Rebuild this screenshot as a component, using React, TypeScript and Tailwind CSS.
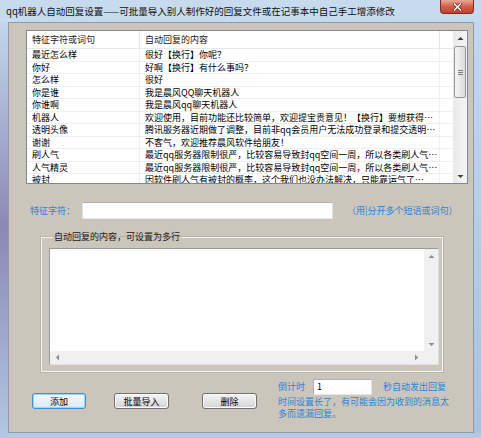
import * as React from 'react'

const rows: [string, string][] = [
  ['最近怎么样', '很好【换行】你呢？'],
  ['你好', '好啊【换行】有什么事吗？'],
  ['怎么样', '很好'],
  ['你是谁', '我是晨风QQ聊天机器人'],
  ['你谁啊', '我是晨风qq聊天机器人'],
  ['机器人', '欢迎使用，目前功能还比较简单，欢迎提宝贵意见！【换行】要想获得…'],
  ['透明头像', '腾讯服务器近期做了调整，目前非qq会员用户无法成功登录和提交透明…'],
  ['谢谢', '不客气，欢迎推荐晨风软件给朋友！'],
  ['刷人气', '最近qq服务器限制很严，比较容易导致封qq空间一周，所以各类刷人气…'],
  ['人气精灵', '最近qq服务器限制很严，比较容易导致封qq空间一周，所以各类刷人气…'],
  ['被封', '因软件刷人气有被封的概率，这个我们也没办法解决，只能靠运气了…'],
]

function Arrow({ dir }: { dir: 'up' | 'down' | 'left' | 'right' }) {
  const pts = {
    up: '0.5,5 3.5,2 6.5,5',
    down: '0.5,2 3.5,5 6.5,2',
    left: '5,0.5 2,3.5 5,6.5',
    right: '2,0.5 5,3.5 2,6.5',
  }[dir]
  return (
    <svg width="7" height="7" viewBox="0 0 7 7">
      <polygon points={pts} fill="currentColor" />
    </svg>
  )
}

function Button({ label, focused, className = '' }: { label: string; focused?: boolean; className?: string }) {
  return (
    <div
      className={`flex h-[16px] items-center justify-center rounded-[3px] border text-[9px] leading-none text-black ${
        focused
          ? 'border-[#3c8fd0] bg-gradient-to-b from-[#f4f9fd] to-[#d9e9f6] shadow-[inset_0_0_0_1px_#9fd4f4]'
          : 'border-[#707070] bg-gradient-to-b from-[#f4f4f4] via-[#e6e6e6] to-[#d2d2d2] shadow-[inset_0_0_0_1px_#fcfcfc]'
      } ${className}`}
    >
      {label}
    </div>
  )
}

export default function App() {
  return (
    <div className="h-[438px] w-[481px] overflow-hidden bg-gradient-to-b from-[#c7dbef] to-[#b4cbe4] font-['Noto_Sans_CJK_SC',sans-serif] text-[9px] text-black">
      {/* title bar */}
      <div className="flex h-[22px] items-start">
        <div className="pl-[6px] pt-[5px] text-[9.5px] leading-[12px] text-[#101010]">
          qq机器人自动回复设置——可批量导入别人制作好的回复文件或在记事本中自己手工增添修改
        </div>
        <div className="ml-auto mr-[7px] flex h-[14px] w-[34px] items-center justify-center rounded-b-[4px] border border-t-0 border-[#7a2c22] bg-gradient-to-b from-[#e8a898] via-[#d0604a] to-[#c4402a]">
          <svg width="9" height="8" viewBox="0 0 9 8">
            <path d="M1.5 1 L7.5 7 M7.5 1 L1.5 7" stroke="#5a1a12" strokeWidth="3" strokeLinecap="square" />
            <path d="M1.5 1 L7.5 7 M7.5 1 L1.5 7" stroke="#ffffff" strokeWidth="1.6" strokeLinecap="square" />
          </svg>
        </div>
      </div>

      <div className="flex h-[411px]">
        <div className="w-[8px] bg-gradient-to-b from-[#c2d7ee] via-[#8c88b4] to-[#b0c6e2]" />

        {/* client area */}
        <div className="flex w-[466px] flex-col border border-[#8d9bab] bg-[#ccc5bb]">
          {/* list view */}
          <div className="ml-[17px] mt-[7px] flex h-[154px] w-[442px] border border-[#828790] bg-white">
            <div className="flex-1 overflow-hidden">
              <div className="flex h-[18px] border-b border-[#e8e8e8] text-[#1a1a1a]">
                <div className="flex w-[113px] items-center border-r border-[#e5e5e5] pl-[5px]">特征字符或词句</div>
                <div className="flex w-[300px] items-center border-r border-[#e5e5e5] pl-[5px]">自动回复的内容</div>
                <div className="flex-1" />
              </div>
              {rows.map(([k, v]) => (
                <div key={k} className="flex h-[12.5px] border-b border-[#efefef] leading-[12px]">
                  <div className="w-[113px] overflow-hidden whitespace-nowrap border-r border-[#efefef] pl-[5px]">{k}</div>
                  <div className="w-[300px] overflow-hidden whitespace-nowrap border-r border-[#efefef] pl-[5px]">{v}</div>
                  <div className="flex-1" />
                </div>
              ))}
            </div>
            {/* scrollbar */}
            <div className="flex w-[14px] flex-col bg-gradient-to-r from-[#e9e9e9] to-[#f5f5f5]">
              <div className="flex h-[14px] items-center justify-center text-[#3c3c3c]">
                <Arrow dir="up" />
              </div>
              <div className="mx-[1px] mt-[1px] flex h-[52px] flex-col items-center justify-center gap-[1px] rounded-[2px] border border-[#959595] bg-gradient-to-r from-[#f6f6f6] to-[#dadada]">
                <div className="h-[1px] w-[5px] bg-[#7a7a7a]" />
                <div className="h-[1px] w-[5px] bg-[#7a7a7a]" />
                <div className="h-[1px] w-[5px] bg-[#7a7a7a]" />
              </div>
              <div className="flex-1" />
              <div className="flex h-[14px] items-center justify-center text-[#3c3c3c]">
                <Arrow dir="down" />
              </div>
            </div>
          </div>

          {/* feature input row */}
          <div className="ml-[21px] mt-[18px] flex h-[17px] items-center">
            <div className="w-[52px] text-[#2a86d8]">特征字符：</div>
            <div className="h-[17px] w-[251px] border border-[#abadb3] border-l-[#e2e3ea] border-b-[#e3e9ef] border-r-[#dbdfe6] bg-white" />
            <div className="ml-[14px] text-[#2a86d8]">（用|分开多个短语或词句）</div>
          </div>

          {/* group box */}
          <fieldset className="ml-[32px] mt-[12px] w-[402px] border border-[#f6f4f0] px-[7px] pb-[6px] pt-[5px] pr-[3px] shadow-[0_0_0_1px_#b9b2a8]">
            <legend className="ml-[4px] px-[1px] leading-[12px] text-[#1a1a1a]">自动回复的内容，可设置为多行</legend>
            <div className="flex h-[117px] flex-col border border-[#9a9a9a] border-b-[#e0e0e0] border-r-[#e0e0e0] bg-white">
              <div className="flex flex-1">
                <div className="flex-1" />
                <div className="flex w-[14px] flex-col bg-[#f0f0f0]">
                  <div className="flex h-[14px] items-center justify-center text-[#8a8a8a]">
                    <Arrow dir="up" />
                  </div>
                  <div className="flex-1" />
                  <div className="flex h-[14px] items-center justify-center text-[#8a8a8a]">
                    <Arrow dir="down" />
                  </div>
                </div>
              </div>
              <div className="flex h-[13px]">
                <div className="flex flex-1 items-center justify-between bg-[#f0f0f0] px-[4px] text-[#8a8a8a]">
                  <Arrow dir="left" />
                  <Arrow dir="right" />
                </div>
                <div className="w-[14px] bg-[#f0f0f0]" />
              </div>
            </div>
          </fieldset>

          {/* bottom area */}
          <div className="flex">
            <div className="ml-[23px] mt-[21px] flex">
              <Button label="添加" focused className="w-[54px]" />
              <Button label="批量导入" className="ml-[28px] w-[55px]" />
              <Button label="删除" className="ml-[33px] w-[55px]" />
            </div>
            <div className="ml-[21px] mt-[7px] flex flex-col text-[#2a86d8]">
              <div className="flex h-[16px] items-center">
                <div className="w-[35px]">倒计时</div>
                <div className="flex h-[16px] w-[59px] items-center border border-[#abadb3] border-b-[#e3e9ef] border-r-[#dbdfe6] bg-white pl-[3px] text-black">1</div>
                <div className="ml-[11px]">秒自动发出回复</div>
              </div>
              <div className="mt-[1px] leading-[11.5px]">
                时间设置长了，有可能会因为收到的消息太
                <br />
                多而遗漏回复。
              </div>
            </div>
          </div>
        </div>

        <div className="w-[7px] bg-gradient-to-b from-[#c2d7ee] to-[#a9c2e0]" />
      </div>
      <div className="h-[5px] bg-[#b3cae4]" />
    </div>
  )
}
